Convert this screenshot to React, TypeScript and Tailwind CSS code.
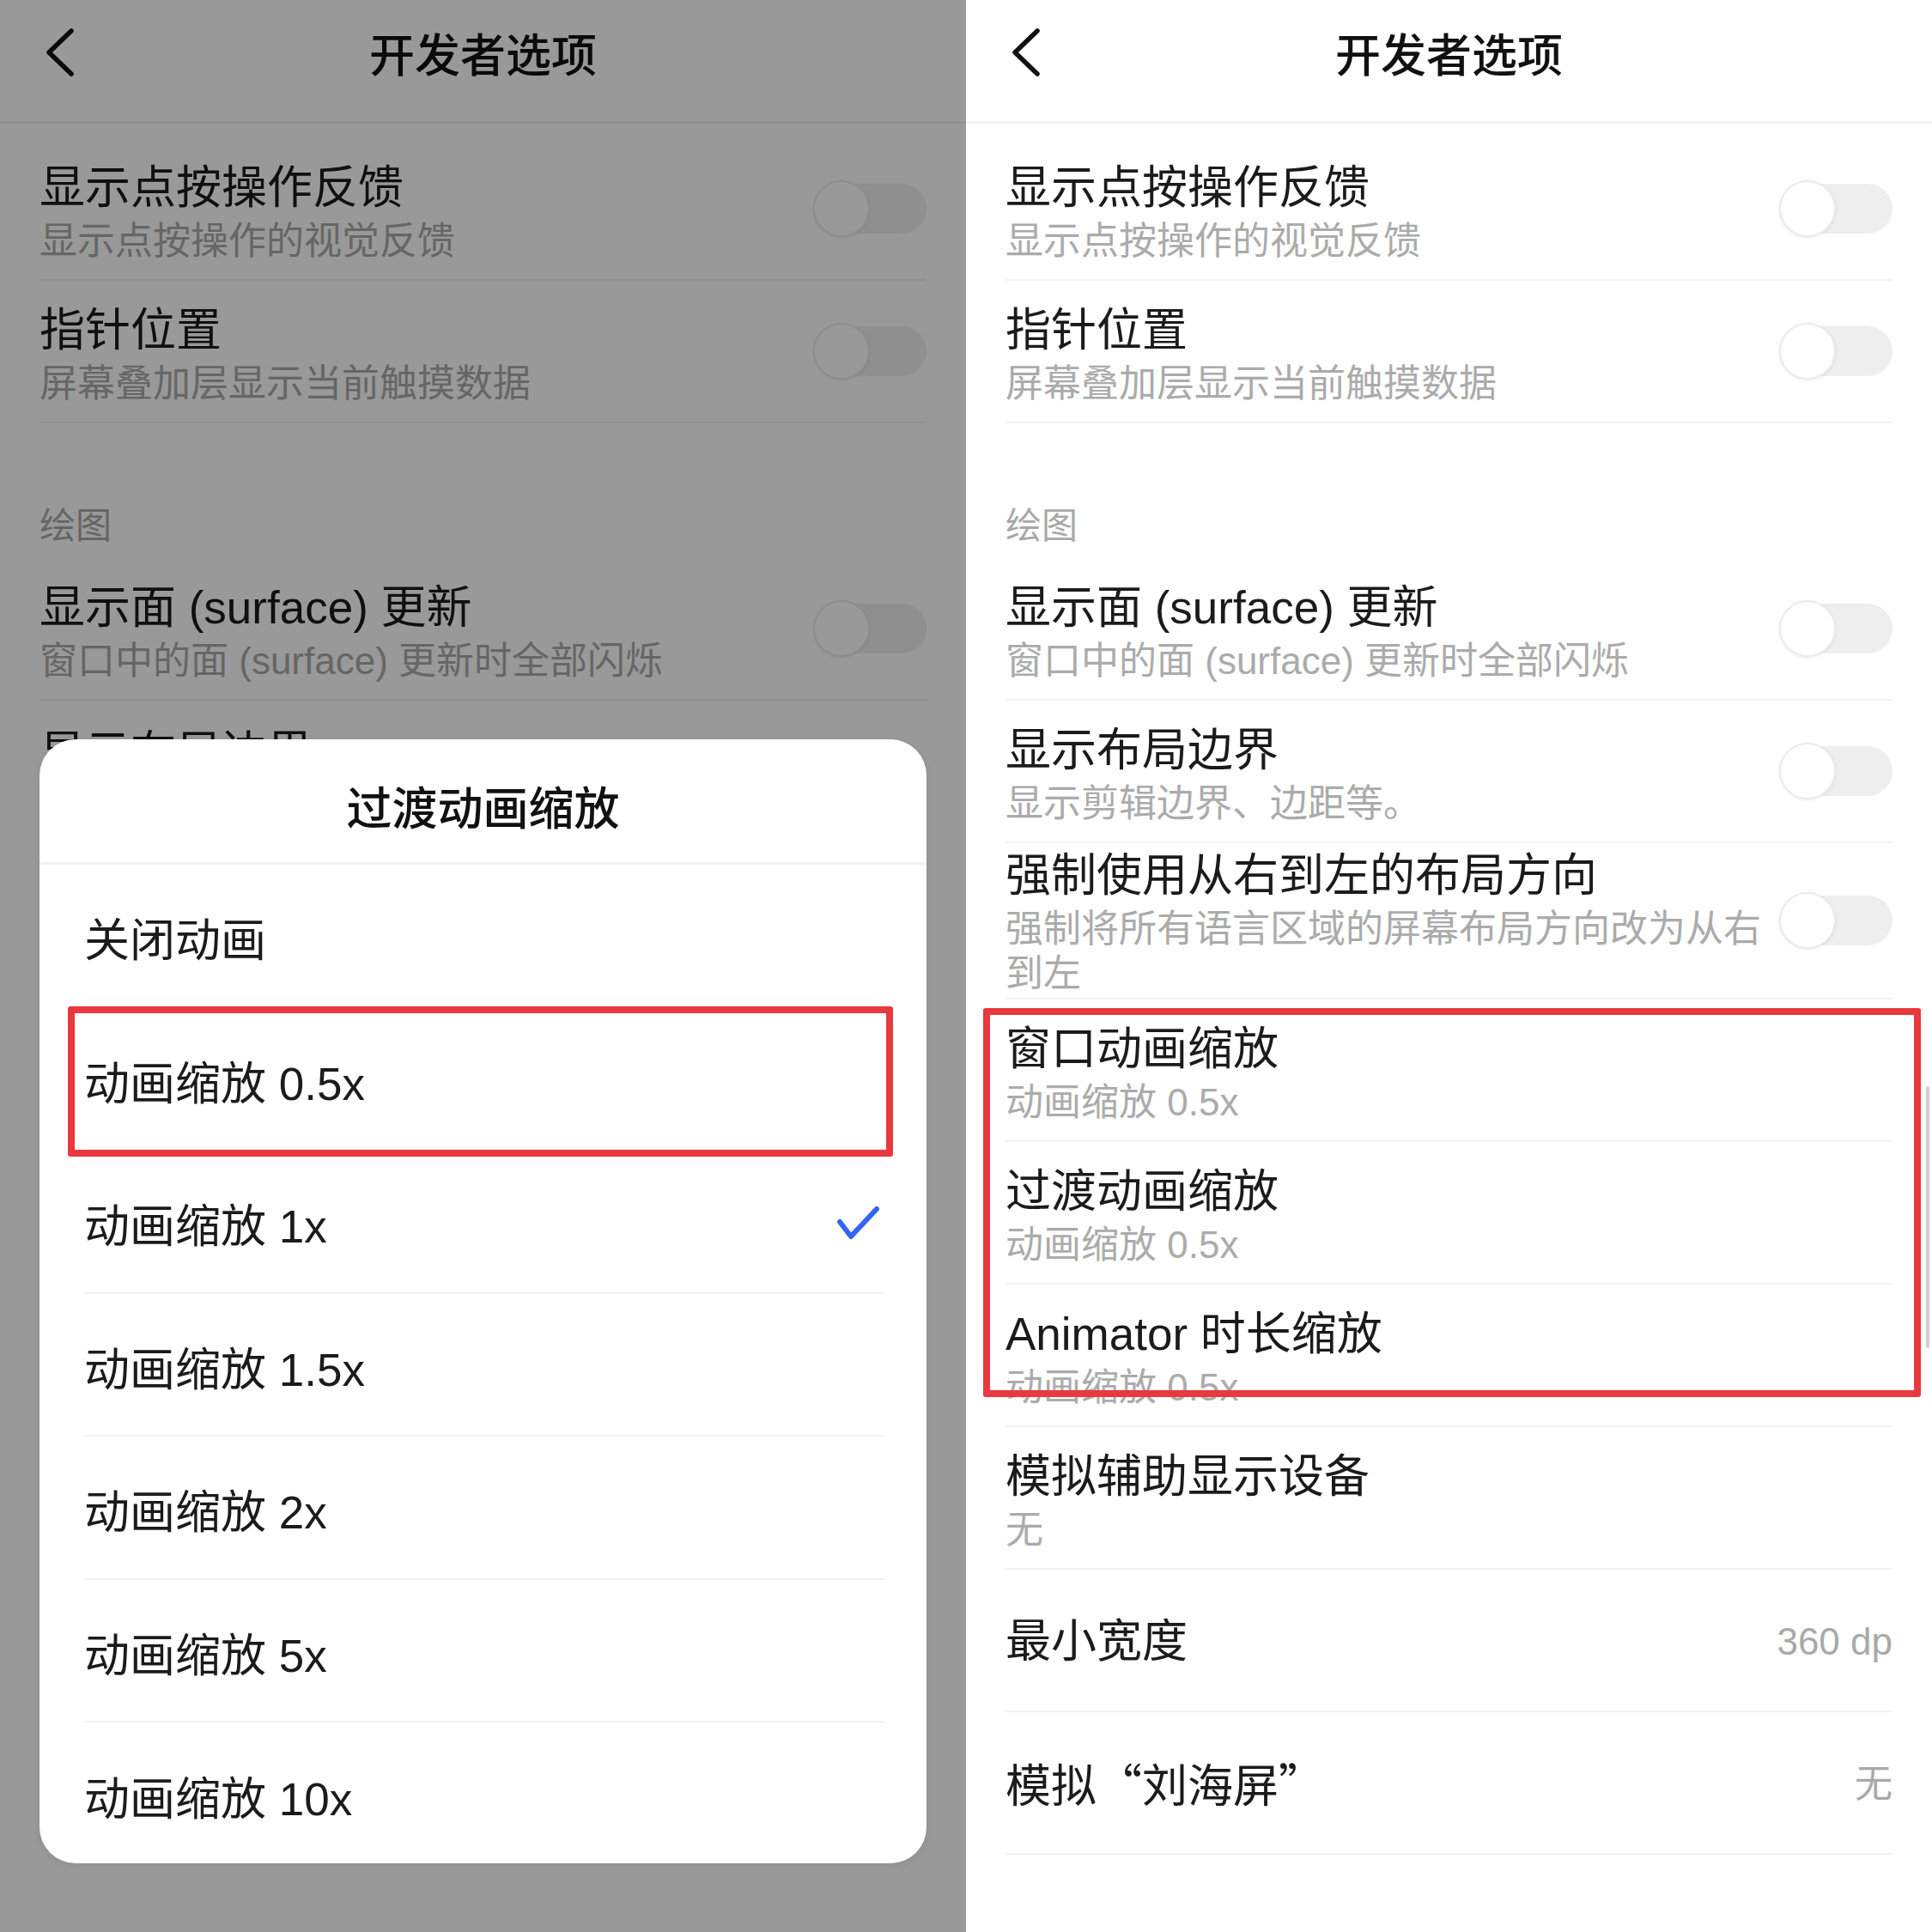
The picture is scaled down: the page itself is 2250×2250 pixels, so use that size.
import React from "react";

type Row = {
  title: React.ReactNode;
  sub?: React.ReactNode;
  value?: string;
  toggle?: boolean;
  tall?: boolean;
};

const topRows: Row[] = [
  { title: "显示点按操作反馈", sub: "显示点按操作的视觉反馈", toggle: true },
  { title: "指针位置", sub: "屏幕叠加层显示当前触摸数据", toggle: true },
];

const drawRows: Row[] = [
  { title: "显示面 (surface) 更新", sub: "窗口中的面 (surface) 更新时全部闪烁", toggle: true },
  { title: "显示布局边界", sub: "显示剪辑边界、边距等。", toggle: true },
  {
    title: "强制使用从右到左的布局方向",
    sub: (
      <>
        强制将所有语言区域的屏幕布局方向改为从右
        <br />
        到左
      </>
    ),
    toggle: true,
    tall: true,
  },
  { title: "窗口动画缩放", sub: "动画缩放 0.5x" },
  { title: "过渡动画缩放", sub: "动画缩放 0.5x" },
  { title: "Animator 时长缩放", sub: "动画缩放 0.5x" },
  { title: "模拟辅助显示设备", sub: "无" },
  { title: "最小宽度", value: "360 dp" },
  {
    title: <span className="font-['Noto_Sans_CJK_SC',sans-serif]">模拟“刘海屏”</span>,
    value: "无",
  },
];

// behind the dialog only the top of "显示布局边界" peeks out
const behindRows: Row[] = [drawRows[0], { title: "显示布局边界" }];

const options = ["关闭动画", "动画缩放 0.5x", "动画缩放 1x", "动画缩放 1.5x", "动画缩放 2x", "动画缩放 5x", "动画缩放 10x"];

function Toggle() {
  return (
    <div className="relative h-[66px] w-[132px] shrink-0">
      <div className="absolute inset-x-0 top-[4px] h-[58px] rounded-full bg-[#eeeeee]" />
      <div className="absolute left-0 top-0 h-[66px] w-[66px] rounded-full border-2 border-[#ebebeb] bg-white shadow-[0_1px_3px_rgba(0,0,0,0.08)]" />
    </div>
  );
}

function SettingRow({ row, alignTop }: { row: Row; alignTop?: boolean }) {
  return (
    <div
      className={`flex justify-between border-b-2 border-[#f2f2f2] ${alignTop ? "items-start pt-[21px]" : "items-center"} ${
        row.tall ? "min-h-[178px] py-[2px]" : "min-h-[166px]"
      }`}
    >
      <div className={`min-w-0 flex-1 ${row.tall ? "" : "pt-[4px]"}`}>
        <div className="text-[53px] leading-[72px] text-[#1b1b1b]">{row.title}</div>
        {row.sub && <div className="text-[44px] leading-[52px] text-[#ababab]">{row.sub}</div>}
      </div>
      {row.toggle && <Toggle />}
      {row.value && <div className="pt-[4px] text-[44px] leading-[52px] text-[#a9a9a9]">{row.value}</div>}
    </div>
  );
}

function SettingsScreen({ behind }: { behind?: boolean }) {
  const rows = behind ? behindRows : drawRows;
  return (
    <div className={`w-full bg-white ${behind ? "h-[886px] overflow-hidden" : "h-full"}`}>
      <div className="grid h-[144px] grid-cols-[1fr_auto_1fr] items-center border-b-[3px] border-[#f3f3f3] pb-[10px]">
        <div className="-mt-[9px] pl-[52px]">
          <svg width="36" height="56" viewBox="0 0 36 56" fill="none">
            <path d="M31 3 L5 28 L31 53" stroke="#111" strokeWidth="5.5" strokeLinecap="round" strokeLinejoin="round" />
          </svg>
        </div>
        <div className="text-[53px] font-medium leading-[70px] text-[#111]">开发者选项</div>
        <div />
      </div>
      <div className="px-[46px] pt-[17px]">
        {topRows.map((r, i) => (
          <SettingRow key={i} row={r} />
        ))}
        <div className="flex h-[157px] items-end pb-[11px] text-[42px] leading-[52px] text-[#a8a8a8]">绘图</div>
        {rows.map((r, i) => (
          <SettingRow key={i} row={r} alignTop={behind && i === 1} />
        ))}
      </div>
    </div>
  );
}

function Dialog() {
  return (
    <div className="absolute left-[46px] top-[861px] h-[1309px] w-[1033px] overflow-hidden rounded-[42px] bg-white shadow-[0_2px_8px_rgba(0,0,0,0.08)]">
      <div className="flex h-[146px] items-center justify-center border-b-[3px] border-[#f2f2f2] pt-[20px] text-[53px] font-medium leading-[70px] text-[#111]">
        过渡动画缩放
      </div>
      <div className="pl-[52px] pr-[49px]">
        {options.map((o, i) => (
          <div
            key={o}
            className={`flex h-[166.5px] items-center justify-between ${
              i < options.length - 1 ? "border-b-2 border-[#f1f1f1]" : ""
            }`}
          >
            <span className="pt-[14px] text-[53px] leading-[70px] text-[#1b1b1b]">{o}</span>
            {o === "动画缩放 1x" && (
              <svg width="50" height="40" viewBox="0 0 50 40" fill="none" className="mr-[5px] mt-[6px]">
                <path d="M3 18 L16 35 L46 3" stroke="#3563f5" strokeWidth="6" strokeLinecap="round" strokeLinejoin="round" />
              </svg>
            )}
          </div>
        ))}
      </div>
    </div>
  );
}

export default function App() {
  return (
    <div className="flex h-[2250px] w-[2250px] font-['Liberation_Sans','Noto_Sans_CJK_SC',sans-serif]">
      <div className="relative h-full w-[1125px] overflow-hidden bg-white">
        <SettingsScreen behind />
        <div className="absolute inset-0 bg-black/40" />
        <Dialog />
        <div className="absolute left-[79px] top-[1172px] h-[175px] w-[961px] rounded-[3px] border-[8px] border-[#e8393f]" />
      </div>
      <div className="relative h-full w-[1125px] overflow-hidden">
        <SettingsScreen />
        <div className="absolute left-[20px] top-[1174px] h-[453px] w-[1092px] rounded-[3px] border-[8px] border-[#e8393f]" />
        <div className="absolute right-[3px] top-[1265px] h-[305px] w-[4px] rounded-full bg-[#cfcfcf]" />
      </div>
    </div>
  );
}
